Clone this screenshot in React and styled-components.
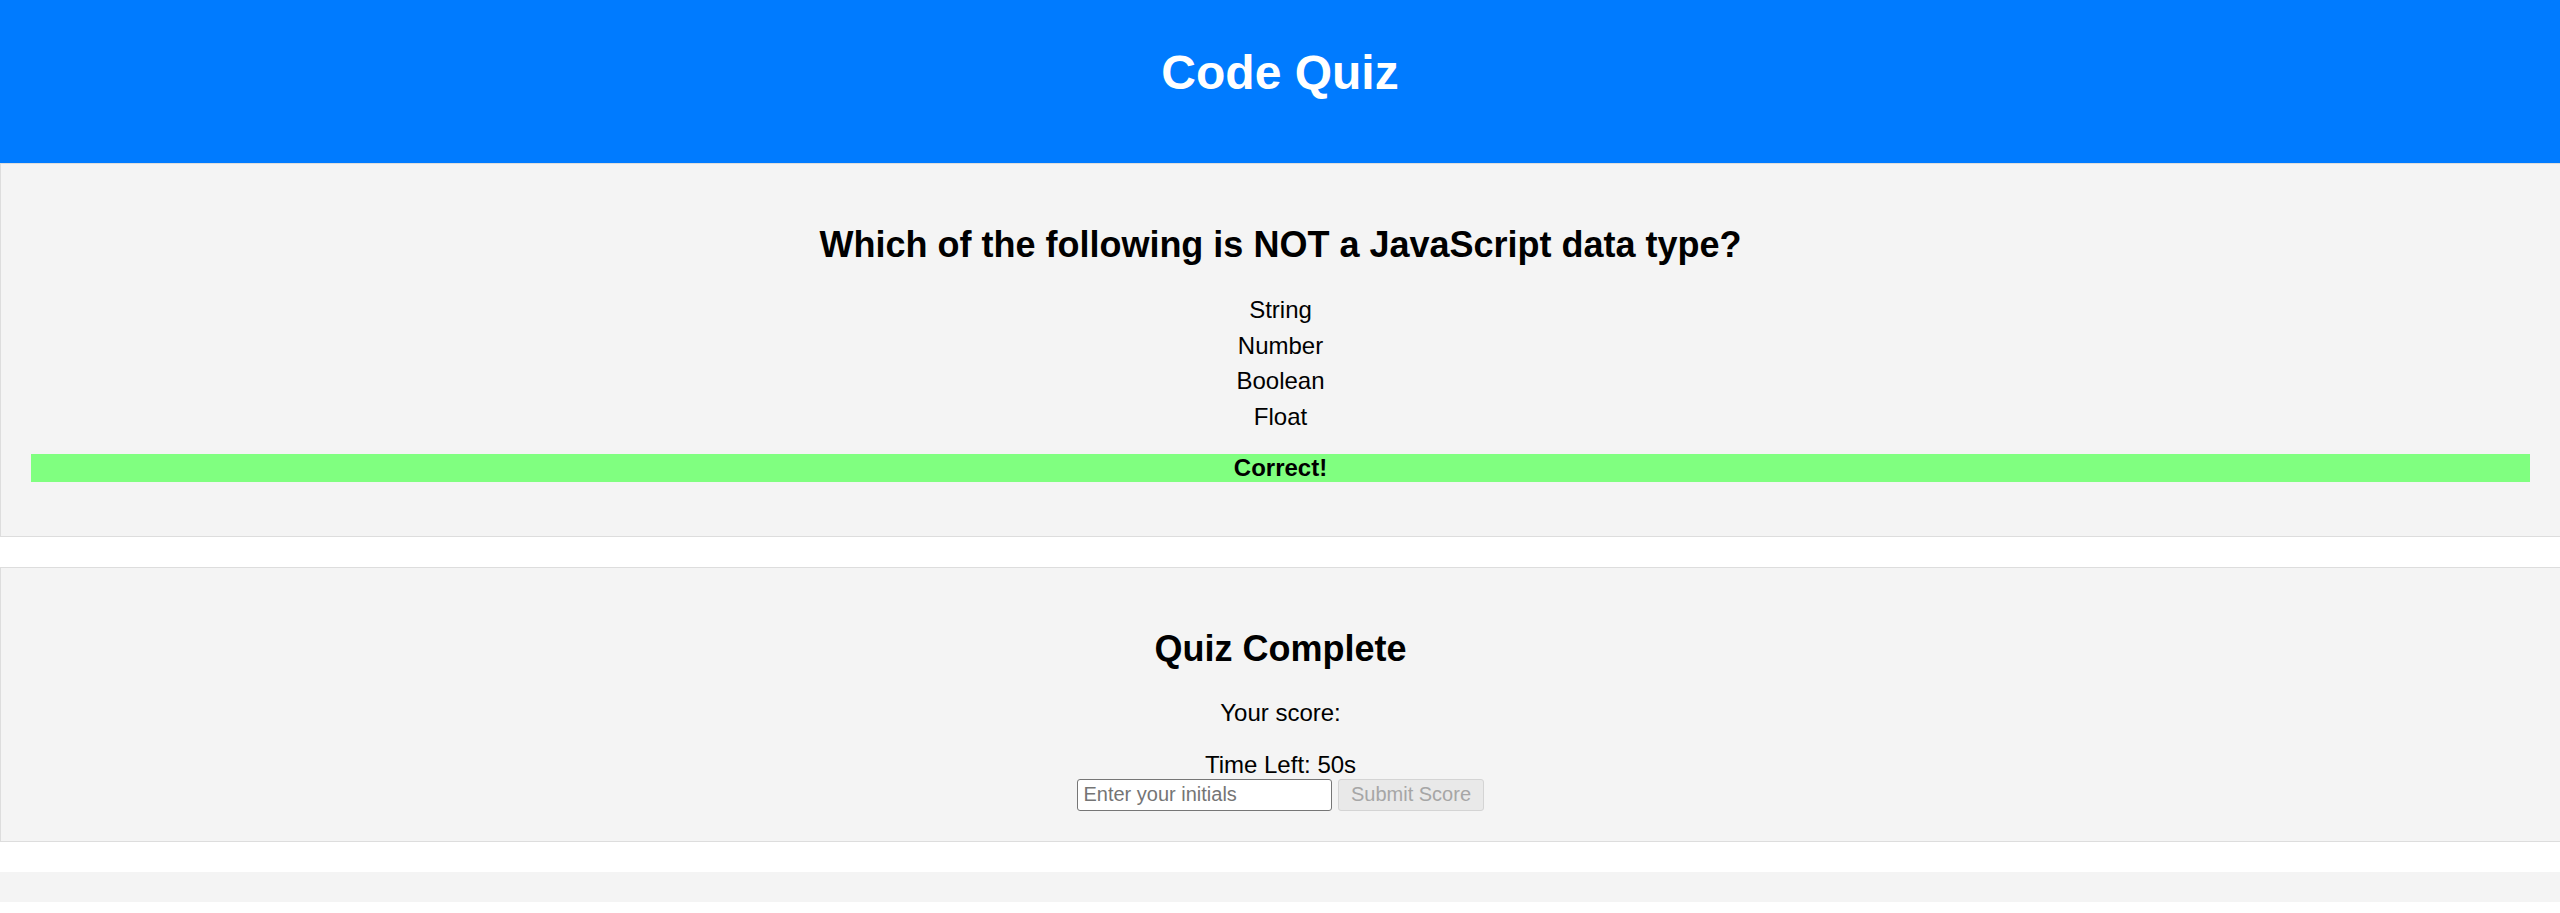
import React from "react";
import styled, { createGlobalStyle } from "styled-components";

const GlobalStyle = createGlobalStyle`
  html, body {
    margin: 0;
    padding: 0;
    background: #ffffff;
    overflow-x: hidden;
  }
  body {
    font-family: "Liberation Sans", Arial, sans-serif;
    font-size: 24px;
    color: #000;
  }
`;

const options = ["String", "Number", "Boolean", "Float"];

const App = () => {
  return (
    <Page>
      <GlobalStyle />
      <Header>
        <Title>Code Quiz</Title>
      </Header>

      <Card>
        <Question>Which of the following is NOT a JavaScript data type?</Question>
        <OptionList>
          {options.map((opt) => (
            <Option key={opt}>{opt}</Option>
          ))}
        </OptionList>
        <Feedback correct>Correct!</Feedback>
      </Card>

      <Card $top={30}>
        <Question $bottom={29}>Quiz Complete</Question>
        <ScoreLine>Your score: </ScoreLine>
        <TimeLine>Time Left: 50s</TimeLine>
        <ScoreForm onSubmit={(e) => e.preventDefault()}>
          <InitialsInput type="text" placeholder="Enter your initials" />
          <SubmitBtn type="submit" disabled>
            Submit Score
          </SubmitBtn>
        </ScoreForm>
      </Card>

      <Strip />
    </Page>
  );
};

export default App;

const Page = styled.div`
  width: 100%;
  overflow: hidden;
`;

const Header = styled.header`
  box-sizing: border-box;
  height: 163px;
  padding-top: 45px;
  background-color: #007bff;
  text-align: center;
`;

const Title = styled.h1`
  margin: 0;
  font-size: 48px;
  font-weight: 700;
  color: #ffffff;
`;

const Card = styled.section`
  box-sizing: border-box;
  width: calc(100% + 1px);
  margin-top: ${(p) => p.$top || 0}px;
  padding: 30px;
  background-color: #f4f4f4;
  border: 1px solid #dddddd;
  text-align: center;
`;

const Question = styled.h2`
  margin: 30px 0 ${(p) => p.$bottom || 30}px;
  font-size: 36px;
  font-weight: 700;
`;

const OptionList = styled.div`
  display: flex;
  flex-direction: column;
  align-items: center;
  gap: 7.5px;
`;

const Option = styled.div`
  font-size: 24px;
  cursor: pointer;
`;

const Feedback = styled.div`
  margin: 23px 0 24px;
  font-weight: 700;
  background-color: ${(p) => (p.correct ? "#80ff80" : "#ff8080")};
`;

const ScoreLine = styled.p`
  margin: 23px 0 24px;
`;

const TimeLine = styled.div`
  margin: 0;
`;

const ScoreForm = styled.form`
  display: flex;
  justify-content: center;
  gap: 6px;
  padding-top: 0.5px;
`;

const InitialsInput = styled.input`
  box-sizing: border-box;
  width: 255px;
  height: 31.5px;
  padding: 0 5px;
  font-family: "Liberation Sans", Arial, sans-serif;
  font-size: 20px;
  background: #ffffff;
  border: 1px solid #767676;
  border-radius: 3px;
  outline: none;

  &::placeholder {
    color: #757575;
  }
`;

const SubmitBtn = styled.button`
  box-sizing: border-box;
  height: 31.5px;
  padding: 0 11.5px;
  font-family: "Liberation Sans", Arial, sans-serif;
  font-size: 20px;
  color: #a6a6a6;
  background-color: #e9e9e9;
  border: 1px solid #d4d4d4;
  border-radius: 3px;
`;

const Strip = styled.div`
  height: 30px;
  margin-top: 30px;
  background-color: #f4f4f4;
`;
